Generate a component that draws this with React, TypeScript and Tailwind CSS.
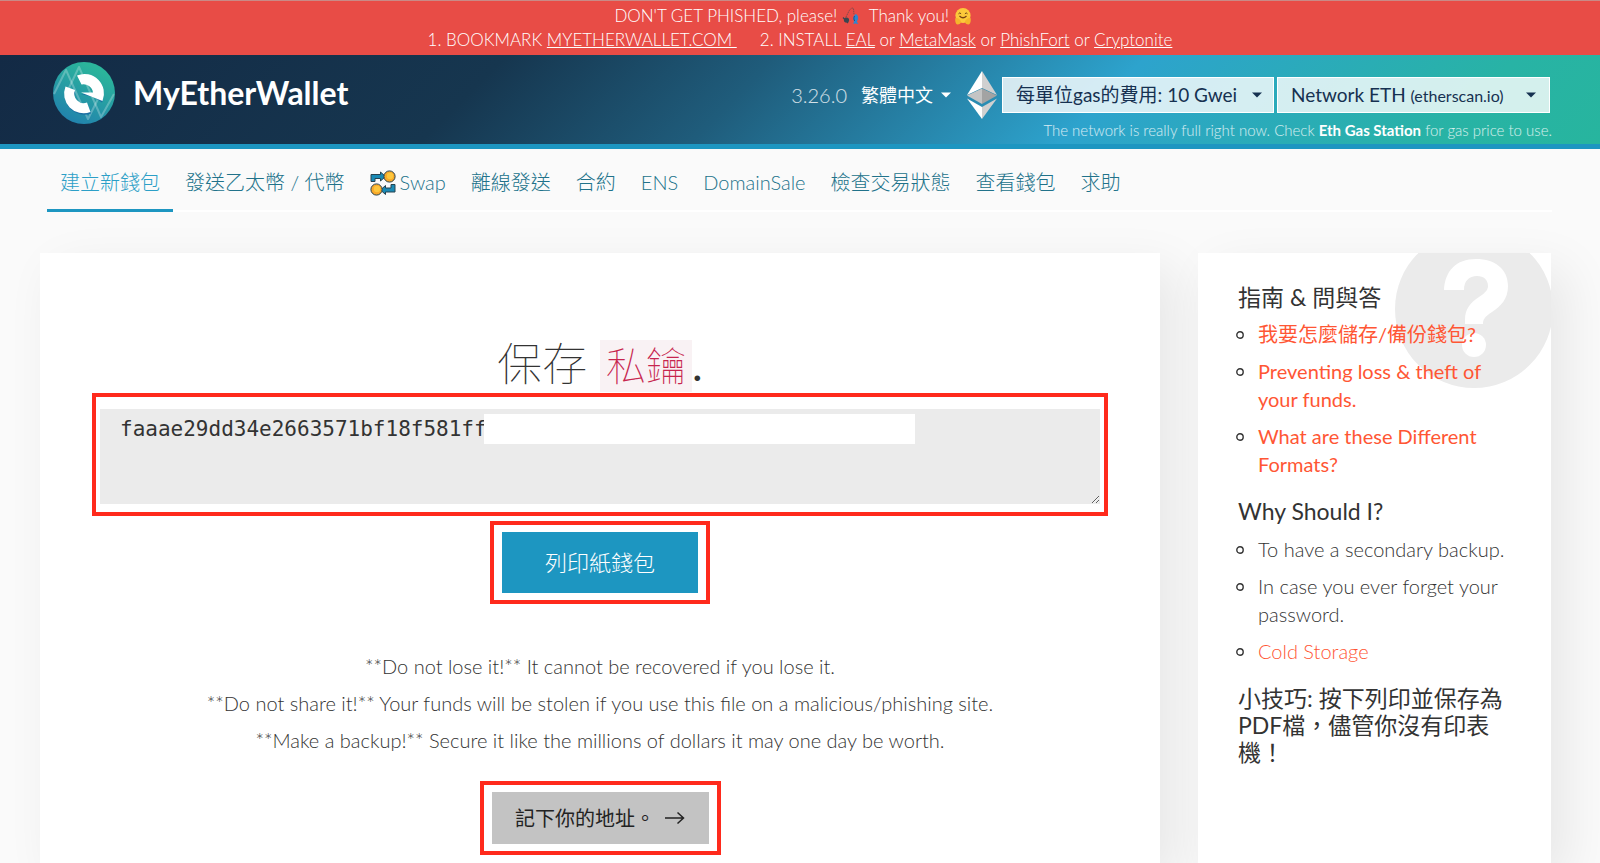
import { useState } from 'react'
import type { ReactNode } from 'react'

const NAV = ['建立新錢包', '發送乙太幣 / 代幣', 'Swap', '離線發送', '合約', 'ENS', 'DomainSale', '檢查交易狀態', '查看錢包', '求助']

const WARNINGS = [
    '**Do not lose it!** It cannot be recovered if you lose it.',
    '**Do not share it!** Your funds will be stolen if you use this file on a malicious/phishing site.',
    '**Make a backup!** Secure it like the millions of dollars it may one day be worth.',
]

function Caret({ className = '' }: { className?: string }) {
    return (
        <svg viewBox="0 0 10 6" className={`w-[10px] h-[6px] ${className}`} fill="currentColor" aria-hidden="true">
            <path d="M0 0.5h10L5 5.5z" />
        </svg>
    )
}

function Logo() {
    return (
        <svg viewBox="0 0 62 62" className="w-[62px] h-[62px]" aria-hidden="true">
            <defs>
                <linearGradient id="logoBg" x1="0.75" y1="0" x2="0.25" y2="1">
                    <stop offset="0.1" stopColor="#2bb59b" />
                    <stop offset="1" stopColor="#2180ae" />
                </linearGradient>
                <clipPath id="logoClip">
                    <circle cx="31" cy="31" r="31" />
                </clipPath>
            </defs>
            <g clipPath="url(#logoClip)">
                <rect width="62" height="62" fill="url(#logoBg)" />
                <g fill="none" stroke="#fff" strokeOpacity="0.25" strokeWidth="2" strokeLinejoin="round">
                    <path d="M1 32 13 8l22 49 13-26" />
                    <path d="M14 30 26 5l22 50 13-23" />
                </g>
                <g fill="#1c6fa3">
                    <path d="M13 26.500a19.500 19.500 0 0 0 25 25l-3.500-9.500a9.500 9.500 0 0 1-12.500-12z" />
                    <path d="M28 32h8l13 8.500 1-3z" />
                </g>
                <path d="M24 13.500a19.500 19.500 0 0 1 25.500 25.500L28 30.500h12a9.500 9.500 0 0 0-11.500-8z" fill="#fff" />
                <path d="M12.500 24.500a19.500 19.500 0 0 0 25 25.500l-3.500-9.500a9.500 9.500 0 0 1-12-12.500z" fill="#fff" />
            </g>
        </svg>
    )
}

function EthIcon() {
    return (
        <svg viewBox="0 0 30 48" className="w-[30px] h-[48px]" aria-hidden="true">
            <path d="M15 0 0 24l15-7z" fill="#fff" />
            <path d="M15 0l15 24-15-7z" fill="#d0d0d0" />
            <path d="M15 17.500 0 24.500 15 33z" fill="#c4c4c4" />
            <path d="M15 17.500l15 7L15 33z" fill="#a3a3a3" />
            <path d="M0 27.500 15 36v12z" fill="#fff" />
            <path d="M30 27.500 15 36v12z" fill="#d0d0d0" />
        </svg>
    )
}

function SwapIcon() {
    return (
        <svg viewBox="0 0 26 26" className="w-[26px] h-[26px] mt-[2px]" aria-hidden="true">
            <g stroke="#27424f" strokeWidth="1">
                <path d="M1 11.500V4.500h9.500V2l5 4.500-5 4.500V8.500H5v3z" fill="#1a8ab5" />
                <path d="M25 14.500v7.500h-9.500v2.500l-5-4.500 5-4.500V18H21v-3.500z" fill="#1a8ab5" />
                <circle cx="19.500" cy="6.500" r="5.600" fill="#f8a929" />
                <circle cx="6.500" cy="19.500" r="5.600" fill="#f8a929" />
            </g>
            <circle cx="20" cy="6" r="3.200" fill="#fdc73d" />
            <circle cx="7" cy="19" r="3.200" fill="#fdc73d" />
        </svg>
    )
}

function FishingIcon() {
    return (
        <svg viewBox="0 0 18 18" className="inline-block w-[18px] h-[18px] align-[-3px]" aria-hidden="true">
            <path d="M3 12 7 4q2.500-4 4.500-2.500l.5 6" fill="none" stroke="#6b4a4c" strokeWidth="0.800" strokeDasharray="1.500 0.600" />
            <circle cx="4.500" cy="13" r="2.600" fill="#3a4650" />
            <path d="M1 10.500 6 16" stroke="#3a4650" strokeWidth="1.200" />
            <path d="M14 7c2.500 1.500 3 5 .8 7.500l1.500 2.500-3-.5-2 .5.8-3c-1.600-2.500-.6-6 1.900-7z" fill="#2f86cf" />
            <path d="M12.500 9c-.8 1.800-.8 3.500.2 5" stroke="#1d4f86" fill="none" />
        </svg>
    )
}

function HugIcon() {
    return (
        <svg viewBox="0 0 18 18" className="inline-block w-[18px] h-[18px] align-[-3px]" aria-hidden="true">
            <circle cx="9" cy="8.500" r="7.600" fill="#fcc93a" />
            <path d="M4.500 6.800q1.300-1.800 2.600 0M10.900 6.800q1.300-1.800 2.600 0" stroke="#6b4216" strokeWidth="1" fill="none" />
            <path d="M5.500 9q3.500 3.500 7 0" stroke="#7a4312" strokeWidth="1.200" fill="none" />
            <path d="M1.500 11c2-.5 5 1.200 5.500 3.500 0 2-1.500 3-3.500 3S.8 13 1.500 11zM16.500 11c-2-.5-5 1.200-5.500 3.500 0 2 1.500 3 3.500 3s2.700-4.500 2-6.500z" fill="#f5b52c" />
        </svg>
    )
}

function PhishingBanner() {
    return (
        <div className="h-[55px] bg-[#e84c46] border-t border-[#c98a86] text-white text-[17px] leading-[24px] font-light text-center pt-[3px]">
            <p>
                DON'T GET PHISHED, please! <FishingIcon />&nbsp; Thank you! <HugIcon />&nbsp; &nbsp;
            </p>
            <p>
                1. BOOKMARK <a href="#mew" className="underline">MYETHERWALLET.COM&nbsp;</a>
                &nbsp; &nbsp; &nbsp;2. INSTALL <a href="#eal" className="underline">EAL</a> or{' '}
                <a href="#metamask" className="underline">MetaMask</a> or{' '}
                <a href="#phishfort" className="underline">PhishFort</a> or{' '}
                <a href="#cryptonite" className="underline">Cryptonite</a>
            </p>
        </div>
    )
}

function Header() {
    return (
        <header className="h-[94px] pl-[53px] pr-12 flex justify-between border-b-5 border-[#1d96c1] text-white bg-[linear-gradient(135deg,#132a45_0%,#16364f_30%,#1f5c7b_46%,#2da3cd_68%,#28b3a5_90%,#27b59e_100%)]">
            <a href="#home" className="flex items-center gap-[18px] h-[76px]">
                <Logo />
                <span className="text-[32px] leading-[36px] font-bold">MyEtherWallet</span>
            </a>
            <div className="pt-[16px] flex flex-col items-end">
                <div className="flex items-center h-[48px] mr-[2px] -mb-[3px]">
                    <span className="text-[20px] font-light text-white/80 mr-[14px]">3.26.0</span>
                    <div className="relative flex items-center mr-[16px]">
                        <select aria-label="Language" className="appearance-none bg-transparent text-[18px] w-[90px]" defaultValue="zh">
                            <option value="zh">繁體中文</option>
                        </select>
                        <Caret className="absolute right-0 pointer-events-none" />
                    </div>
                    <EthIcon />
                    <div className="relative ml-[5px] flex items-center">
                        <select
                            aria-label="Gas price"
                            defaultValue="10"
                            className="appearance-none h-[36px] w-[272px] pl-[13px] border border-white bg-white/80 text-[#163151] text-[19px]"
                        >
                            <option value="10">每單位gas的費用: 10 Gwei</option>
                        </select>
                        <Caret className="absolute right-[12px] text-[#163151] pointer-events-none" />
                    </div>
                    <button
                        type="button"
                        aria-haspopup="true"
                        className="ml-[3px] h-[36px] w-[273px] px-[13px] flex items-center justify-between border border-white bg-white/80 text-[#163151] text-[19px]"
                    >
                        <span>
                            Network ETH <small className="text-[16px]">(etherscan.io)</small>
                        </span>
                        <Caret />
                    </button>
                </div>
                <p className="text-[15px] leading-[28px] font-light text-white/80">
                    The network is really full right now. Check{' '}
                    <a href="#gas" className="font-bold text-white">Eth Gas Station</a> for gas price to use.
                </p>
            </div>
        </header>
    )
}

function Nav() {
    return (
        <nav className="pl-[48px] pr-12">
            <ul className="flex border-b-2 border-white">
                {NAV.map((label, i) => (
                    <li key={label} className="-ml-px">
                        <a
                            href={`#tab-${i}`}
                            className={`flex items-center gap-1 h-[63px] pt-[5px] px-[13px] text-[20px] font-light whitespace-nowrap -mb-[2px] border-b-3
                                ${i === 0 ? 'text-[#2c9fc7] border-[#1d96c1]' : 'text-[#21728a] border-transparent'}`}
                        >
                            {label === 'Swap' && <SwapIcon />}
                            {label}
                        </a>
                    </li>
                ))}
            </ul>
        </nav>
    )
}

function SavePanel() {
    const [privateKey, setPrivateKey] = useState('faaae29dd34e2663571bf18f581ff')

    return (
        <section className="flex-1 min-w-0 bg-white shadow-[16px_16px_47px_0_rgba(0,0,0,0.08)] px-[52px] pt-[83px] pb-[6px] flex flex-col items-center">
            <h1 className="text-[45px] leading-[57px] font-thin text-[#333]">
                保存 <span className="inline-block px-[6px] leading-[52px] text-[40px] text-[#c7254e] bg-[#f9f2f4]">私鑰</span>
                <span className="font-normal">.</span>
            </h1>

            <div className="self-stretch border-4 border-[#ff2a1c] px-[4px] pt-[12px] pb-[8px] relative">
                <textarea
                    aria-label="私鑰"
                    value={privateKey}
                    onChange={(e) => setPrivateKey(e.target.value)}
                    className="block w-full h-[95px] bg-[#ebebeb] px-[20px] py-[6px] text-[21px] leading-[28px] text-[#333] font-['DejaVu_Sans_Mono',monospace]"
                />
                {/* covers the rest of the key */}
                <div className="absolute left-[388px] top-[17px] w-[431px] h-[30px] bg-white" />
            </div>

            <div className="mt-[5px] border-4 border-[#ff2a1c] px-[8px] py-[7px]">
                <button type="button" className="block w-[196px] h-[61px] bg-[#1d96c1] text-white text-[22px] font-light">
                    列印紙錢包
                </button>
            </div>

            <div className="mt-[48px] flex flex-col gap-[9px] text-center text-[20px] leading-[28px] font-light text-[#333]">
                {WARNINGS.map((w) => (
                    <p key={w}>{w}</p>
                ))}
            </div>

            <div className="mt-[27px] border-4 border-[#ff2a1c] px-[8px] py-[7px]">
                <button type="button" className="flex items-center justify-center gap-[10px] w-[217px] h-[52px] bg-[#c3c3c3] text-[#222] text-[20px]">
                    記下你的地址。
                    <svg viewBox="0 0 20 14" className="w-[20px] h-[14px]" fill="none" stroke="currentColor" strokeWidth="1.500" aria-hidden="true">
                        <path d="M0 7h18M12.500 1.500 18.500 7l-6 5.500" />
                    </svg>
                </button>
            </div>
        </section>
    )
}

function Item({ children }: { children: ReactNode }) {
    return (
        <li className="flex">
            <span className="w-[20px] shrink-0 pt-[11px]">
                <svg viewBox="0 0 8 8" className="block w-[8px] h-[8px] -ml-[2px]" aria-hidden="true">
                    <circle cx="4" cy="4" r="3.200" fill="none" stroke="#333" strokeWidth="1.400" />
                </svg>
            </span>
            <span>{children}</span>
        </li>
    )
}

function HelpPanel() {
    return (
        <aside className="relative overflow-hidden w-[353px] shrink-0 bg-white px-10 pt-[31px] text-[20px] leading-[28px] text-[#333] h-full">
            <svg viewBox="0 0 158 158" className="absolute -top-[23px] left-[197px] w-[158px] h-[158px]" aria-hidden="true">
                <circle cx="79" cy="79" r="79" fill="#ebebeb" />
                <path d="M49 60C50 41 61 29 81 29c19 0 32 10 32 27 0 13-7 20-16 26-8 5-9 8-9 12H70v-4c0-11 5-17 14-23 6-4 9-7 9-11 0-6-4-10-11-10-8 0-13 5-13 14z" fill="#fff" />
                <circle cx="79" cy="115" r="12" fill="#fff" />
            </svg>

            <div className="relative">
                <h2 className="text-[23px] leading-[27px]">指南 &amp; 問與答</h2>
                <ul className="mt-[9px] flex flex-col gap-[9px]">
                    <Item><a href="#save" className="text-[#ff5634]">我要怎麼儲存/備份錢包?</a></Item>
                    <Item><a href="#loss" className="text-[#ff5634]">Preventing loss &amp; theft of your funds.</a></Item>
                    <Item><a href="#formats" className="text-[#ff5634]">What are these Different Formats?</a></Item>
                </ul>
                <h2 className="mt-[20px] text-[23px] leading-[27px]">Why Should I?</h2>
                <ul className="mt-[10px] flex flex-col gap-[9px] font-light">
                    <Item>To have a secondary backup.</Item>
                    <Item>In case you ever forget your password.</Item>
                    <Item><a href="#cold" className="text-[#ff5634]">Cold Storage</a></Item>
                </ul>
                <h2 className="mt-[20px] text-[23px] leading-[27px]">小技巧: 按下列印並保存為PDF檔，儘管你沒有印表機！</h2>
            </div>
        </aside>
    )
}

export default function App() {
    return (
        <div lang="zh-Hant" className="min-h-screen flex flex-col bg-[#fafafa] overflow-x-hidden font-['Lato','Noto_Sans_CJK_TC',sans-serif]">
            <PhishingBanner />
            <Header />
            <Nav />
            <main className="flex-1 flex gap-[38px] pl-10 pr-[49px] mt-[41px]">
                <SavePanel />
                <div className="shadow-[16px_16px_47px_0_rgba(0,0,0,0.08)]">
                    <HelpPanel />
                </div>
            </main>
        </div>
    )
}
